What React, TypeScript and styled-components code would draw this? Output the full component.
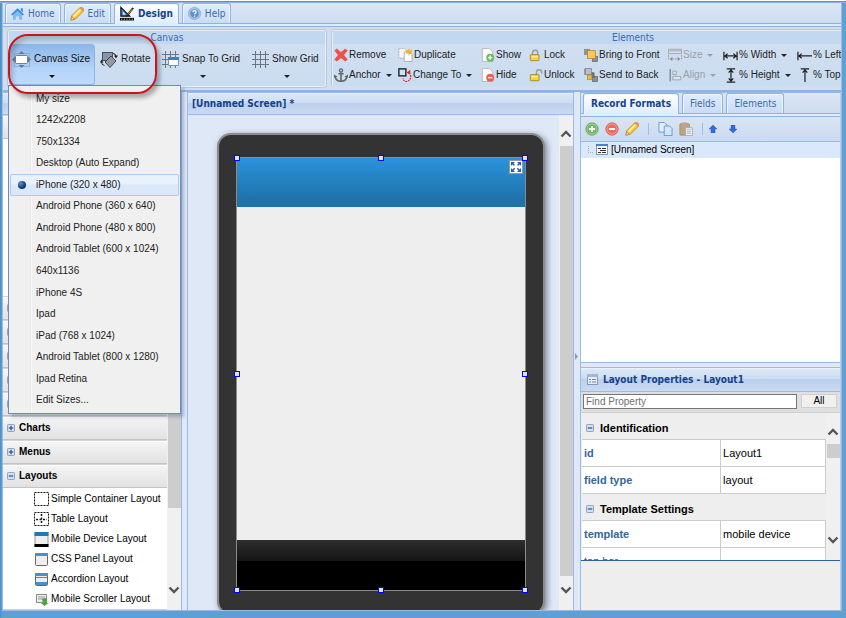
import React from "react";
import styled, { createGlobalStyle, css } from "styled-components";

const sans = `"Liberation Sans", Arial, sans-serif`;
const ui = `"DejaVu Sans Condensed", "DejaVu Sans", Tahoma, sans-serif`;
const line = "#99bbe8";
const navy = "#15428b";

const Global = createGlobalStyle`
  *, *::before, *::after { box-sizing: border-box; }
  body { margin: 0; overflow: hidden; background: #5f9fd3; font: 10px/14px ${sans}; color: #000; }
  button, input { font: inherit; color: inherit; margin: 0; }
  button { border: 0; background: none; padding: 0; text-align: left; white-space: nowrap; }
  svg { display: block; flex: none; }
  ul { list-style: none; margin: 0; padding: 0; }
  h2 { margin: 0; font-size: inherit; }
`;

const Page = styled.div`
  display: flex;
  flex-direction: column;
  height: 100vh;
  padding: 0 4px 7px 2px;
  background: linear-gradient(90deg, #4f8cc4, #5f9fd3 2px);
`;
const Frame = styled.div`
  flex: 1;
  min-height: 0;
  display: flex;
  flex-direction: column;
  border: 1px solid ${line};
  border-top: 0;
  background: #dfe8f6;
`;
const TopEdge = styled.div`
  height: 3px;
  margin: 0 -5px 0 -3px;
  background: linear-gradient(#fbfcf8 0 1px, #868b80 1px 2px, #8db2e3 2px);
`;

/* Tabs */
const TabBar = styled.nav`
  flex: none;
  display: flex;
  align-items: flex-end;
  gap: 3px;
  height: 21px;
  padding-left: 2px;
  background: linear-gradient(#dbe6f4, #cddcf0);
  border-bottom: 1px solid #8db2e3;
`;
const Tab = styled.button<{ $active?: boolean; $plain?: boolean }>`
  display: flex;
  align-items: center;
  gap: 4px;
  height: 20px;
  padding: 0 ${(p) => (p.$plain ? 7 : 5)}px;
  font-family: ${ui};
  color: #416aa3;
  border: 1px solid #8db2e3;
  border-bottom: 0;
  border-radius: 3px 3px 0 0;
  background: linear-gradient(#deecfd, #c9dcf5);
  box-shadow: inset 1px 1px 0 #eff6ff, inset -1px 0 0 #eff6ff;
  ${(p) =>
    p.$active &&
    css`
      height: 21px;
      margin-bottom: -1px;
      padding-bottom: 1px;
      font-weight: bold;
      color: ${navy};
      background: linear-gradient(#ffffff, #deecfd);
    `}
`;
const TabFoot = styled.div`
  flex: none;
  height: 3px;
  background: #deecfd;
  border-bottom: 1px solid #8db2e3;
`;

/* Ribbon */
const Ribbon = styled.section`
  flex: none;
  position: relative;
  z-index: 2;
  display: flex;
  gap: 4px;
  height: 65px;
  padding: 2px 0 4px 4px;
  background: #d0def0;
  border-bottom: 2px solid #8fb4e4;
`;
const GroupClip = styled.div`
  flex: 1;
  min-width: 0;
  overflow: hidden;
`;
const Group = styled.div<{ $min: number }>`
  flex: none;
  width: ${(p) => p.$min}px;
  height: 59px;
  padding: 1px;
  border: 1px solid #b7c8de;
  border-radius: 3px;
  background: linear-gradient(#d3e0f0, #c9dcf0);
  box-shadow: inset 0 0 0 1px #e6eef8;
`;
const GroupTitle = styled.h2`
  height: 13px;
  line-height: 13px;
  font-family: ${ui};
  font-weight: normal;
  text-align: center;
  color: #3e6aaa;
  background: #c2d8f0;
`;
const BigButtons = styled.div`
  display: grid;
  grid-template-columns: 86px 60px 88px 1fr;
  column-gap: 2px;
`;
const BigCell = styled.div`
  position: relative;
`;
const BigButton = styled.button<{ $on?: boolean }>`
  display: flex;
  flex-direction: column;
  width: 100%;
  height: 41px;
  padding: 0 2px;
  color: #222;
  border: 1px solid transparent;
  border-radius: 3px;
  ${(p) =>
    p.$on &&
    css`
      color: #111;
      border-color: #8fb3e2;
      background: linear-gradient(#8db7ea, #b4d4f8 60%, #bcdafb);
    `}
`;
const BigLabel = styled.span`
  display: flex;
  align-items: center;
  gap: 3px;
  height: 28px;
`;
const Arrow = styled.span`
  width: 0;
  border: 3px solid transparent;
  border-top-color: currentColor;
  border-bottom: 0;
`;
const BigArrow = styled(Arrow)`
  align-self: center;
  margin-top: 2px;
`;
const Commands = styled.div`
  display: grid;
  grid-template-columns: 64px 83px 48px 55px 84px 55px 74px 1fr;
  grid-auto-rows: 20px;
  padding: 1px 0 0 1px;
`;
const Command = styled.button`
  display: flex;
  align-items: center;
  gap: 1px;
  color: #222;
  &:disabled { color: #9aa0a8; }
  & > ${Arrow} { margin-left: 4px; }
`;
const Callout = styled.div`
  position: absolute;
  z-index: 4;
  left: 5px;
  top: 7px;
  width: 149px;
  height: 60px;
  border: 2px solid #c8141a;
  border-radius: 20px;
  box-shadow: 3px 4px 4px rgba(0, 0, 0, 0.3), inset 3px 4px 4px rgba(0, 0, 0, 0.18);
  pointer-events: none;
`;

/* Size menu */
const Menu = styled.div`
  position: absolute;
  z-index: 3;
  top: 41px;
  left: -1px;
  display: grid;
  grid-auto-rows: 1fr;
  width: 173px;
  height: 329px;
  padding: 2px 1px;
  border: 1px solid #718bb7;
  background: linear-gradient(90deg, #f0f0f0 21px, #e6e6e6 21px 22px, #fafafa 22px 23px, #f0f0f0 23px);
  box-shadow: 3px 3px 3px rgba(90, 110, 150, 0.4);
`;
const MenuItem = styled.button<{ $on?: boolean }>`
  display: grid;
  grid-template-columns: 25px 1fr;
  align-items: center;
  color: #222;
  border: 1px solid transparent;
  border-radius: 2px;
  ${(p) =>
    p.$on &&
    css`
      border-color: #a9cbf5;
      background: linear-gradient(#e9f1fb 45%, #dae8fa 50%);
    `}
`;
const Bullet = styled.span`
  display: block;
  width: 8px;
  height: 8px;
  margin-left: 7px;
  border-radius: 50%;
  background: radial-gradient(circle at 35% 30%, #5c94c8, #0b3d78 60%);
`;

/* Workspace */
const Workspace = styled.main`
  flex: 1;
  min-height: 0;
  display: grid;
  grid-template-columns: 179px 5px minmax(0, 387px) 6px minmax(261px, 1fr);
`;
const Column = styled.section`
  display: flex;
  flex-direction: column;
  min-width: 0;
  min-height: 0;
  border: 1px solid ${line};
  border-width: 1px 1px 0 1px;
  background: #fff;
`;
const LeftColumn = styled(Column)`
  border-left: 0;
`;
const PanelHead = styled.header`
  flex: none;
  display: flex;
  align-items: center;
  gap: 5px;
  height: 22px;
  padding-left: 4px;
  font-family: ${ui};
  font-weight: bold;
  color: ${navy};
  border-bottom: 1px solid ${line};
  background: linear-gradient(#f0f6fd, #dae6f5 8%, #cddef3 45%, #bccfec 50%, #c9daf2);
`;
const PropsHead = styled(PanelHead)`
  height: 24px;
  padding-left: 6px;
`;
const Splitter = styled.div`
  display: flex;
  align-items: center;
  padding-top: 10px;
  background: #dfe8f6;
`;
const PaletteBody = styled.div`
  flex: 1;
  min-height: 0;
  display: flex;
`;
const Palette = styled.div`
  flex: 1;
  min-width: 0;
  display: flex;
  flex-direction: column;
  overflow: hidden;
`;
const Section = styled.button`
  flex: none;
  display: flex;
  align-items: center;
  gap: 4px;
  height: 24px;
  padding-left: 4px;
  font-weight: bold;
  border-bottom: 1px solid #c4c4c4;
  box-shadow: inset 0 1px 0 #d4d4d4, inset 0 2px 0 #fff;
  background: linear-gradient(#f6f6f6, #e2e2e2);
`;
const OpenSpace = styled.div`
  flex: 1;
`;
const Parts = styled.ul`
  flex: none;
  height: 122px;
  padding-top: 1px;
  border-bottom: 1px solid #d0d0d0;
`;
const Part = styled.button`
  display: flex;
  align-items: center;
  gap: 1px;
  width: 100%;
  height: 20px;
  padding-left: 31px;
`;

/* Scrollbars */
const Track = styled.div`
  flex: none;
  display: flex;
  flex-direction: column;
  width: 14px;
  background: #f0f0f0;
`;
const Cap = styled.div`
  flex: none;
  display: flex;
  flex-direction: column;
  align-items: center;
  height: 31px;
  padding-top: 15px;
`;
const EndCap = styled(Cap)`
  height: 34px;
  padding-top: 10px;
`;
const Thumb = styled.div<{ $grow: number; $h?: number }>`
  flex: ${(p) => (p.$grow ? p.$grow + " 1 0" : "none")};
  height: ${(p) => p.$h ?? 0}px;
  margin-left: 1px;
  background: #cdcdcd;
`;
const Rest = styled.div<{ $h?: number }>`
  flex: ${(p) => (p.$h ? "none" : "1")};
  height: ${(p) => p.$h ?? 0}px;
`;

/* Canvas */
const Stage = styled.div`
  flex: 1;
  min-height: 0;
  display: flex;
`;
const Canvas = styled.div`
  flex: 1;
  min-width: 0;
  overflow: hidden;
  padding: 18px 0 0 29px;
  background: #dfe8f6;
`;
const Device = styled.div`
  width: 328px;
  padding: 22px 17px;
  border: 2px solid #8c8c8c;
  border-radius: 14px;
  background: #333;
  box-shadow: 2px 2px 6px rgba(40, 50, 70, 0.55);
`;
const Screen = styled.div`
  position: relative;
  border: 1px solid #8c8c8c;
  background: #eee;
`;
const ScreenTop = styled.div`
  display: flex;
  justify-content: flex-end;
  height: 49px;
  padding: 2px;
  background: linear-gradient(#2c93dc, #1f72aa 85%);
`;
const ScreenBody = styled.div`
  height: 333px;
`;
const ScreenFoot = styled.div`
  height: 50px;
  background: linear-gradient(#2f2f2f, #141414 21px, #000 21px);
`;
const Handle = styled.i<{ $x: number; $y: number }>`
  position: absolute;
  left: ${(p) => p.$x}%;
  top: ${(p) => p.$y}%;
  width: 6px;
  height: 6px;
  margin: -3px;
  border: 1px solid #00f;
  background: #e4e4e4;
`;

/* Right side */
const RightColumn = styled(Column)`
  border-right-color: #b5cdef;
  background: #dfe8f6;
`;
const IconBar = styled.div`
  flex: none;
  display: flex;
  align-items: center;
  gap: 6px;
  height: 25px;
  padding-left: 4px;
  border-bottom: 1px solid ${line};
  background: linear-gradient(#d9e5f4, #cbdaee);
`;
const Separator = styled.span`
  width: 1px;
  height: 12px;
  margin: 0 3px;
  background: #98c0ec;
`;
const Arrows = styled.span`
  display: flex;
  gap: 12px;
  margin-left: -3px;
`;
const Tree = styled.div`
  flex: 1;
  background: #fff;
  border-bottom: 1px solid ${line};
`;
const TreeItem = styled.button`
  display: flex;
  align-items: center;
  gap: 3px;
  width: 100%;
  height: 16px;
  padding-left: 7px;
  background: #d9e8fb;
`;
const Gap = styled.div`
  flex: none;
  height: 5px;
  border-bottom: 1px solid ${line};
`;
const Search = styled.form`
  flex: none;
  display: flex;
  gap: 4px;
  height: 21px;
  padding: 2px 3px 2px 2px;
  background: #dfdfdf;
  border-bottom: 1px solid #d0d0d0;
`;
const SearchInput = styled.input`
  flex: 1;
  min-width: 0;
  height: 15px;
  padding: 0 2px;
  border: 1px solid #767676;
  border-radius: 0;
  background: #fff;
  &::placeholder { color: #6e6e6e; opacity: 1; }
`;
const AllButton = styled.button`
  width: 36px;
  height: 14px;
  line-height: 12px;
  text-align: center;
  background: #f0f0f0;
  border: 1px solid #d0d0d0;
`;
const PropScroll = styled.div`
  flex: none;
  display: flex;
  height: 148px;
  overflow: hidden;
  background: #eee;
  border-bottom: 1px solid #2a629c;
`;
const PropArea = styled.div`
  flex: 1;
  padding-left: 1px;
  min-width: 0;
`;
const PropTable = styled.table`
  width: 100%;
  border-spacing: 0;
  table-layout: fixed;
  font-size: 11px;
  line-height: 14px;
`;
const PropHead = styled.th`
  height: 27px;
  padding: 3px 0 0 4px;
  text-align: left;
  border-bottom: 1px solid #ccc;
`;
const HeadButton = styled.button`
  display: flex;
  align-items: center;
  gap: 6px;
`;
const Name = styled.th<{ $plain?: boolean }>`
  height: 27px;
  padding: 0 0 0 2px;
  text-align: left;
  color: ${(p) => (p.$plain ? "#555" : "#336699")};
  font-weight: ${(p) => (p.$plain ? "normal" : "bold")};
  background: #fff;
  border: 1px solid #ccc;
  border-width: 0 1px 1px 0;
`;
const Value = styled.td`
  padding: 0 0 0 2px;
  background: #fff;
  border: 1px solid #ccc;
  border-width: 0 1px 1px 0;
`;
const Description = styled.div`
  flex: none;
  height: 49px;
  background: #eee;
`;

type P = { children: React.ReactNode; w?: number; h?: number; vw?: number; vh?: number };
const Svg = ({ children, w = 14, h = 14, vw = 16, vh = 16 }: P) => (
  <svg width={w} height={h} viewBox={`0 0 ${vw} ${vh}`} fill="none" aria-hidden="true">
    {children}
  </svg>
);

const HomeIcon = () => (
  <Svg w={13}>
    <path d="M2.500 8v7H6v-4h4v4h3.500V8L8 3z" fill="#7dbdf0" />
    <path d="M0 8.500 8 1l8 7.500-1.500 1.200L8 4 1.500 9.700z" fill="#3c8ad8" />
    <path d="M12 1h2.500v5L12 4z" fill="#3c8ad8" />
  </Svg>
);
const PencilIcon = ({ w = 14 }: { w?: number }) => (
  <Svg w={w} h={w}>
    <path d="m1 15 1-5 9-9q2-1 4 1 1 2 0 3l-9 9z" fill="#fbc83c" stroke="#c98618" />
    <path d="m4 11 8-8" stroke="#fff0a8" strokeWidth="2" />
    <path d="m1 15 1-4 3 3z" fill="#f6dfc0" stroke="#9a6a20" strokeWidth=".6" />
    <path d="m11 1 4 4q2-2 0-4t-4 0" fill="#e89058" />
  </Svg>
);
const DesignIcon = () => (
  <Svg w={14} h={15}>
    <path d="M1 1v10h10z" fill="#4a8fd0" stroke="#111" strokeWidth="1.4" />
    <path d="M3.5 6v3h3z" fill="#e8f4ff" />
    <path d="M0 13h16v3H0z" fill="#111" />
    <path d="M2 14v1m3-1v1m3-1v1m3-1v1m3-1v1" stroke="#fff" />
    <path d="m7 10 7-9 2 1-7 9-3 1z" fill="#222" />
    <path d="m9 9 5-6" stroke="#e0b030" />
  </Svg>
);
const HelpIcon = () => (
  <Svg w={13} h={13}>
    <circle cx="8" cy="8" r="7.5" fill="#a9c6e6" stroke="#86a8d0" />
    <circle cx="8" cy="8" r="5.2" fill="#5b8fca" />
    <path d="M6 6.5Q6 4.5 8 4.500T10 6.500Q10 7.500 8 9M8 10.500v1.500" stroke="#fff" strokeWidth="1.6" />
  </Svg>
);
const CanvasIcon = () => (
  <Svg w={19} h={17} vw={19} vh={17}>
    <path d="M2.500 2.500h15v13h-15z" stroke="#7d93ab" strokeDasharray="1 1" />
    <path d="m9.500 0 3 3h-6zM9.500 17l3-3h-6zM0 8.500l3-3v6zM19 8.500l-3-3v6z" fill="#6a7c90" />
    <rect x="3.500" y="4.500" width="12" height="8" rx="1" fill="#fff" stroke="#7a7f86" />
  </Svg>
);
const RotateIcon = () => (
  <Svg w={18} h={17} vw={18} vh={17}>
    <rect x="2.500" y="1.500" width="10" height="8" fill="#8497ad" stroke="#4a4f56" />
    <path d="m5 11 6-6 5 5-6 6.500z" fill="#96999e" stroke="#44474b" />
    <path d="M13 2.500q3 0 3 3M1.500 11q0 3 3 3.500" stroke="#222" />
    <path d="m0 11.500 1.500-3 2 3zM14 4.500h4L16 7.500z" fill="#222" />
  </Svg>
);
const GridIcon = ({ snap }: { snap?: boolean }) => (
  <Svg w={17} h={17} vw={17} vh={17}>
    <path d="M3.500 0v17M8.500 0v17M13.500 0v17M0 3.500h17M0 8.500h17M0 13.500h17" stroke="#6d7680" />
    {snap && <path d="M6.500 6.500h10v8h-10z" fill="#fff" stroke="#6699cc" />}
    {snap && <path d="M6 6h11v3H6z" fill="#2f86cc" />}
  </Svg>
);
const RemoveIcon = () => (
  <Svg>
    <path d="M1 3 3 1l5 4 5-4 2 2-4 5 4 5-2 2-5-4-5 4-2-2 4-5z" fill="#f0504c" stroke="#e04a48" strokeWidth=".8" />
  </Svg>
);
const AnchorIcon = () => (
  <Svg>
    <circle cx="8" cy="2.800" r="1.800" stroke="#666" strokeWidth="1.500" />
    <path d="M8 5v10M5 6.500h6M1.500 9q0 6 6.500 6t6.500-6" stroke="#666" strokeWidth="1.800" />
    <path d="M0 11V7.500L4 10zM16 11V7.500L12 10z" fill="#666" />
  </Svg>
);
const PagesIcon = ({ star, blue }: { star?: boolean; blue?: boolean }) => {
  const s = blue ? "#5f8fd0" : "#a6a6a6";
  return (
    <Svg w={15}>
      <path d="M.500 .500h6l3 3v8h-9z" fill={blue ? "#e4f0ff" : "#f8f8f8"} stroke={s} strokeDasharray={star ? "2 1" : undefined} />
      <path d="M6.500 4.500h6l3 3v8h-9z" fill={blue ? "#d3e6ff" : "#fff"} stroke={s} />
      {star && <path d="m12 0 1 3 3-1-1.500 3L16 7l-3-.5L12 9l-1-3-3 .5L9.500 4 8 2l3 .5z" fill="#f0b020" />}
    </Svg>
  );
};
const ChangeIcon = () => (
  <Svg>
    <rect x="1" y="1" width="8" height="8" fill="#cfe0f4" stroke="#222" strokeWidth="1.600" />
    <path d="m10 5 4-3v6z" fill="#d8242a" />
    <path d="M14.500 8q1 6-5 7.500-4-1-3.500-4" stroke="#d8242a" strokeWidth="1.400" strokeDasharray="2 1" />
  </Svg>
);
const PageIcon = ({ show }: { show?: boolean }) => (
  <Svg>
    <path d="M1.500 .500h8l4 4v11h-12z" fill="#fdfdfd" stroke="#aeb4bc" />
    <circle cx="10.500" cy="11" r="4.500" fill={show ? "#6cb85c" : "#e8604c"} />
    <path d={show ? "M8 11h5M10.500 8.500v5" : "M8 11h5"} stroke="#fff" strokeWidth="1.600" />
  </Svg>
);
const LockIcon = ({ open }: { open?: boolean }) => (
  <Svg>
    <path d={open ? "M8.500 8V5q0-3 3-3t3 3v1.500" : "M4 8V5.500q0-3 3-3t3 3V8"} stroke="#989da3" strokeWidth="1.600" />
    <rect x="1.500" y="7.500" width="10" height="7" rx="1" fill="#f8cf3c" stroke="#a88424" />
    <path d="M3 10h7" stroke="#fff3a8" strokeWidth="1.500" />
  </Svg>
);
const StackIcon = ({ front }: { front?: boolean }) => (
  <Svg>
    <rect x=".500" y="1.500" width="6" height="6" fill={front ? "#8b9199" : "#f2c14a"} stroke="#888" strokeWidth=".8" />
    <rect x="9.500" y="9.500" width="6" height="6" fill="#8b8f96" stroke="#666" strokeWidth=".8" />
    {front ? (
      <rect x="4" y="3" width="9" height="9" fill="#fbc95a" stroke="#b98a2c" />
    ) : (
      <>
        <rect x="6.500" y="5.500" width="5" height="5" fill="#6f7680" stroke="#555" strokeWidth=".8" />
        <rect x="1.500" y=".500" width="7" height="7" fill="#b9bfc8" stroke="#7a8088" strokeWidth=".8" />
        <rect x="4" y="8" width="5" height="5" fill="#f0ba3c" stroke="#b0862c" strokeWidth=".8" />
      </>
    )}
  </Svg>
);
const SizeIcon = () => (
  <Svg>
    <path d="M.500 1.500h15v5H.500z" stroke="#9aa0a8" />
    <path d="M1 3h14" stroke="#b8bdc4" strokeWidth="2" />
    <path d="M.500 8v6M15.500 8v6M2 12.500h12" stroke="#8e949c" strokeDasharray="2 1" />
    <path d="m2 12.500 3-2.500v5zM14 12.500 11 10v5z" fill="#8e949c" />
  </Svg>
);
const AlignIcon = () => (
  <Svg>
    <path d="M2.500 1v14" stroke="#777c84" strokeWidth="1.400" />
    <path d="M5.500 3.500h4v4h-4zM5.500 9.500h9v4h-9z" fill="#dde3ea" stroke="#9aa0a8" />
  </Svg>
);
const MeasureIcon = ({ kind }: { kind: "w" | "h" | "l" | "t" }) => (
  <Svg w={15} h={15}>
    {kind === "w" && <path d="M1 4v9M15 4v9M2 8.500h12M5 6 2 8.500 5 11M11 6l3 2.500L11 11" stroke="#222" strokeWidth="1.300" />}
    {kind === "l" && <path d="M1 4v9M2 8.500h14M5 6 2 8.500 5 11" stroke="#222" strokeWidth="1.300" />}
    {kind === "h" && <path d="M4 1h9M4 15h9M8.500 2v12M6 5l2.500-3L11 5M6 11l2.500 3 2.500-3" stroke="#222" strokeWidth="1.300" />}
    {kind === "t" && <path d="M4 1h9M8.500 2v13M6 5l2.500-3L11 5" stroke="#222" strokeWidth="1.300" />}
  </Svg>
);
const Toggle = ({ open }: { open?: boolean }) => (
  <Svg w={8} h={8} vw={9} vh={9}>
    <rect x=".500" y=".500" width="8" height="8" rx="1" fill="#d3e0f0" stroke="#7d98bd" />
    <path d={open ? "M2 4.500h5" : "M2 4.500h5M4.500 2v5"} stroke="#1d3f78" strokeWidth="1.200" />
  </Svg>
);
const Chevron = ({ up }: { up?: boolean }) => (
  <Svg w={12} h={8} vw={12} vh={8}>
    <path d={up ? "m1.500 6.500 4.500-4.500 4.500 4.500" : "m1.500 1.500 4.500 4.500 4.500-4.500"} stroke="#555" strokeWidth="2.400" />
  </Svg>
);
const RoundIcon = ({ add }: { add?: boolean }) => (
  <Svg>
    <circle cx="8" cy="8" r="7" fill={add ? "#6cb861" : "#ee6a5c"} stroke={add ? "#55a050" : "#d2503f"} />
    <circle cx="8" cy="8" r="5.800" stroke="#fff" strokeOpacity=".45" />
    <path d={add ? "M4.500 8h7M8 4.500v7" : "M4.500 8h7"} stroke="#fff" strokeWidth="2.200" />
  </Svg>
);
const PasteIcon = () => (
  <Svg>
    <rect x="1" y="2" width="11" height="13" rx="1" fill="#c3a27e" stroke="#a88a68" />
    <path d="M4 .500h5v3H4z" fill="#aaa" />
    <path d="M7.500 6.500h8v9h-8z" fill="#eef0f4" stroke="#a8adb8" />
    <path d="M9 9h5m-5 2h5m-5 2h5" stroke="#b0b5bf" />
  </Svg>
);
const MoveIcon = ({ up }: { up?: boolean }) => (
  <Svg w={8} h={8} vw={8} vh={8}>
    <path d={up ? "M4 0 8 4H6v4H2V4H0z" : "M4 8 0 4h2V0h4v4h2z"} fill="#2f6ae0" stroke="#2450b0" strokeWidth=".4" />
  </Svg>
);
const ScreenIcon = () => (
  <Svg w={12} h={12} vw={12} vh={12}>
    <rect x=".500" y=".500" width="11" height="10" fill="#f8fafd" stroke="#8a95a8" />
    <path d="M0 0h12v2H0z" fill="#4d7fc8" />
    <path d="M2 4.500h3m-1 2h6m-8 2h3m1 0h4M6 4.500h4" stroke="#333" />
  </Svg>
);
const FormIcon = () => (
  <Svg w={11} h={11} vw={11} vh={11}>
    <rect x=".500" y=".500" width="10" height="10" fill="#e6edf7" stroke="#8299bd" />
    <path d="M0 0h11v3H0z" fill="#a3b6d4" />
    <path d="M2 5.500h2m1 0h4M2 8h2m1 0h4" stroke="#7388ab" />
  </Svg>
);
const ExpandIcon = () => (
  <Svg w={14} h={14} vw={14} vh={14}>
    <path d="M.500 .500h13v13H.500z" fill="#fff" stroke="#9a9a9a" />
    <path d="M2 2h4L2 6zM12 2v4L8 2zM2 12V8l4 4zM12 12H8l4-4z" fill="#2860a8" />
    <path d="m3 3 8 8M11 3l-8 8" stroke="#2860a8" strokeWidth="1.400" strokeDasharray="3.500 4" />
  </Svg>
);
const PartIcon = ({ kind }: { kind: string }) => (
  <Svg w={16} h={15} vw={16} vh={15}>
    {(kind === "box" || kind === "table") && <path d="M.500 .500h14v13H.500z" stroke="#111" strokeDasharray="2 1" fill="#fff" />}
    {kind === "table" && <path d="M7.500 2v10M2 7.500h11" stroke="#111" strokeWidth="1.500" strokeDasharray="2 1.500" />}
    {kind === "device" && <path d="M1 0h13v15H1z" fill="#eee" stroke="#999" />}
    {kind === "device" && <path d="M.500 0h14v4H.500z" fill="#2378b4" />}
    {kind === "device" && <path d="M.500 12h14v3H.500z" fill="#000" />}
    {(kind === "panel" || kind === "accordion") && <rect x="1.500" y="1.500" width="12" height="12" rx="1" fill="#eee" stroke="#666" />}
    {(kind === "panel" || kind === "accordion") && <path d="M1 1h13v3H1z" fill="#4a90c8" />}
    {kind === "accordion" && <path d="M2 5h11v1H2zM2 10h11v3H2z" fill="#4a90c8" />}
    {kind === "scroller" && <path d="M2.500 2.500h10v8h-10z" fill="#eee" stroke="#888" />}
    {kind === "scroller" && <path d="M4 5h7M4 7h5" stroke="#999" />}
    {kind === "scroller" && <path d="M8 7q3-2 5 0v4h1.500L10.500 14 7 11h2z" fill="#4aa540" />}
  </Svg>
);

const sizes = [
  "My size", "1242x2208", "750x1334", "Desktop (Auto Expand)", "iPhone (320 x 480)",
  "Android Phone (360 x 640)", "Android Phone (480 x 800)", "Android Tablet (600 x 1024)",
  "640x1136", "iPhone 4S", "Ipad", "iPad (768 x 1024)", "Android Tablet (800 x 1280)",
  "Ipad Retina", "Edit Sizes...",
];

type Cmd = { label: string; icon: React.ReactNode; menu?: boolean; off?: boolean };
const commands: Cmd[] = [
  { label: "Remove", icon: <RemoveIcon /> },
  { label: "Duplicate", icon: <PagesIcon star /> },
  { label: "Show", icon: <PageIcon show /> },
  { label: "Lock", icon: <LockIcon /> },
  { label: "Bring to Front", icon: <StackIcon front /> },
  { label: "Size", icon: <SizeIcon />, menu: true, off: true },
  { label: "% Width", icon: <MeasureIcon kind="w" />, menu: true },
  { label: "% Left", icon: <MeasureIcon kind="l" />, menu: true },
  { label: "Anchor", icon: <AnchorIcon />, menu: true },
  { label: "Change To", icon: <ChangeIcon />, menu: true },
  { label: "Hide", icon: <PageIcon /> },
  { label: "Unlock", icon: <LockIcon open /> },
  { label: "Send to Back", icon: <StackIcon /> },
  { label: "Align", icon: <AlignIcon />, menu: true, off: true },
  { label: "% Height", icon: <MeasureIcon kind="h" />, menu: true },
  { label: "% Top", icon: <MeasureIcon kind="t" />, menu: true },
];

const parts = [
  ["Simple Container Layout", "box"],
  ["Table Layout", "table"],
  ["Mobile Device Layout", "device"],
  ["CSS Panel Layout", "panel"],
  ["Accordion Layout", "accordion"],
  ["Mobile Scroller Layout", "scroller"],
];

const handles = [[0, 0], [50, 0], [100, 0], [0, 50], [100, 50], [0, 100], [50, 100], [100, 100]];

const PropGroup = ({ title, rows }: { title: string; rows: string[][] }) => (
  <tbody>
    <tr>
      <PropHead colSpan={2}>
        <HeadButton><Toggle open />{title}</HeadButton>
      </PropHead>
    </tr>
    {rows.map(([name, value]) => (
      <tr key={name}>
        <Name scope="row" $plain={!value}>{name}</Name>
        <Value>{value}</Value>
      </tr>
    ))}
  </tbody>
);

export default function App() {
  return (
    <Page>
      <Global />
      <Frame>
        <TopEdge />
        <TabBar>
          <Tab><HomeIcon />Home</Tab>
          <Tab><PencilIcon />Edit</Tab>
          <Tab $active><DesignIcon />Design</Tab>
          <Tab><HelpIcon />Help</Tab>
        </TabBar>
        <TabFoot />

        <Ribbon>
          <Group $min={320}>
            <GroupTitle>Canvas</GroupTitle>
            <BigButtons>
              <BigCell>
                <BigButton $on aria-haspopup="menu" aria-expanded="true">
                  <BigLabel><CanvasIcon />Canvas Size</BigLabel>
                  <BigArrow />
                </BigButton>
                <Menu role="menu" aria-label="Canvas Size">
                  {sizes.map((s) => (
                    <MenuItem key={s} role="menuitem" $on={s.startsWith("iPhone (")}>
                      <span>{s.startsWith("iPhone (") && <Bullet />}</span>
                      {s}
                    </MenuItem>
                  ))}
                </Menu>
              </BigCell>
              <BigButton><BigLabel><RotateIcon />Rotate</BigLabel></BigButton>
              <BigButton><BigLabel><GridIcon snap />Snap To Grid</BigLabel><BigArrow /></BigButton>
              <BigButton><BigLabel><GridIcon />Show Grid</BigLabel><BigArrow /></BigButton>
            </BigButtons>
          </Group>
          <GroupClip>
            <Group $min={604}>
              <GroupTitle>Elements</GroupTitle>
              <Commands>
                {commands.map((c) => (
                  <Command key={c.label} disabled={c.off}>
                    {c.icon}{c.label}{c.menu && <Arrow />}
                  </Command>
                ))}
              </Commands>
            </Group>
          </GroupClip>
          <Callout />
        </Ribbon>

        <Workspace>
          <LeftColumn>
            <PanelHead />
            <Section aria-label="Palette" />
            <PaletteBody>
              <Palette>
                <OpenSpace />
                {["a", "b", "c", "d", "e"].map((k) => (
                  <Section key={k} aria-label="Section"><Toggle /></Section>
                ))}
                <Section><Toggle />Charts</Section>
                <Section><Toggle />Menus</Section>
                <Section><Toggle open />Layouts</Section>
                <Parts>
                  {parts.map(([label, kind]) => (
                    <li key={label}><Part><PartIcon kind={kind} />{label}</Part></li>
                  ))}
                </Parts>
              </Palette>
              <Track>
                <Cap><Chevron up /></Cap>
                <Thumb $grow={1} />
                <Rest $h={68} />
                <EndCap><Chevron /></EndCap>
              </Track>
            </PaletteBody>
          </LeftColumn>
          <Splitter />

          <Column>
            <PanelHead>[Unnamed Screen] *</PanelHead>
            <Stage>
              <Canvas>
                <Device>
                  <Screen>
                    <ScreenTop><ExpandIcon /></ScreenTop>
                    <ScreenBody />
                    <ScreenFoot />
                    {handles.map(([x, y]) => <Handle key={`${x}-${y}`} $x={x} $y={y} />)}
                  </Screen>
                </Device>
              </Canvas>
              <Track>
                <Cap><Chevron up /></Cap>
                <Thumb $grow={1} />
                <EndCap><Chevron /></EndCap>
              </Track>
            </Stage>
          </Column>
          <Splitter>
            <Svg w={5} h={7} vw={5} vh={7}><path d="m1 0 3 3.500L1 7z" fill="#8a9bb5" /></Svg>
          </Splitter>

          <RightColumn>
            <TabBar>
              <Tab $active $plain>Record Formats</Tab>
              <Tab $plain>Fields</Tab>
              <Tab $plain>Elements</Tab>
            </TabBar>
            <TabFoot />
            <IconBar>
              <RoundIcon add /><RoundIcon /><PencilIcon />
              <Separator /><PagesIcon blue /><PasteIcon />
              <Separator />
              <Arrows><MoveIcon up /><MoveIcon /></Arrows>
            </IconBar>
            <Tree>
              <TreeItem>
                <Svg w={5} h={8} vw={5} vh={8}><path d="M.500 0v6.500H5" stroke="#aaa" strokeDasharray="1 1" /></Svg>
                <ScreenIcon />[Unnamed Screen]
              </TreeItem>
            </Tree>
            <Gap />
            <PropsHead><FormIcon />Layout Properties - Layout1</PropsHead>
            <Search>
              <SearchInput type="text" placeholder="Find Property" aria-label="Find Property" />
              <AllButton type="button">All</AllButton>
            </Search>
            <PropScroll>
              <PropArea>
                <PropTable>
                  <colgroup><col width="57%" /><col width="43%" /></colgroup>
                  <PropGroup title="Identification" rows={[["id", "Layout1"], ["field type", "layout"]]} />
                  <PropGroup title="Template Settings" rows={[["template", "mobile device"], ["top bar", ""]]} />
                </PropTable>
              </PropArea>
              <Track>
                <Cap><Chevron up /></Cap>
                <Thumb $grow={0} $h={14} />
                <Rest />
                <EndCap><Chevron /></EndCap>
              </Track>
            </PropScroll>
            <Description />
          </RightColumn>
        </Workspace>
      </Frame>
    </Page>
  );
}
